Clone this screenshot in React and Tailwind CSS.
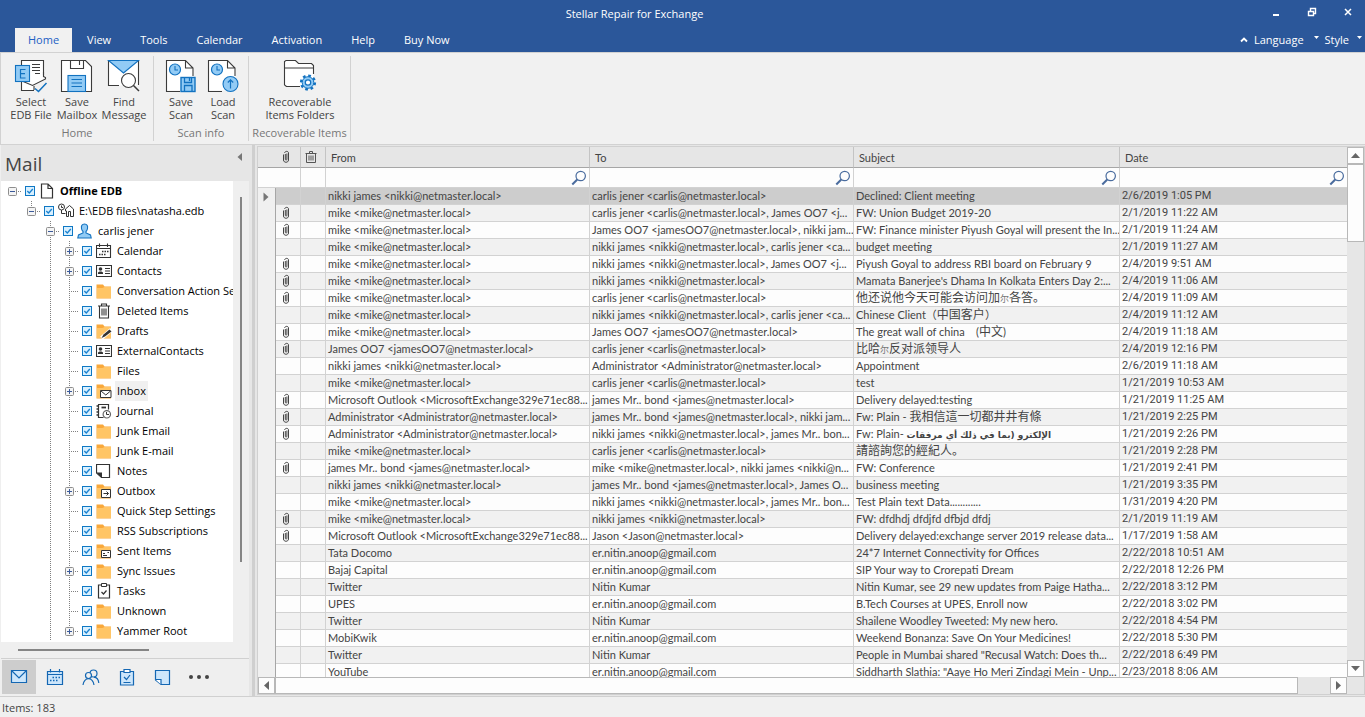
import React from "react";

const TABS = ["Home", "View", "Tools", "Calendar", "Activation", "Help", "Buy Now"];

const INK = "#3b3b3b";
const BLUE = "#1272c0";
const SKY = "#92cbf5";

/* ---------- ribbon icons ---------- */

function RibbonSvg({ children }) {
  return (
    <svg width="34" height="34" viewBox="0 0 34 34" fill="none" stroke={INK} strokeWidth="1.1" aria-hidden="true">
      {children}
    </svg>
  );
}

function EdbIcon() {
  return (
    <RibbonSvg>
      <path d="M7.500 1.500H29.500V20L20 26V31.500H7.500Z" fill="#fff" stroke="none" />
      <path d="M7.500 6.500V1.500H29.500V16M7.500 23V31.500H20" />
      <path d="M29.500 13v5M8 22L18.500 26.500L31.500 20V18.500L29.500 17.500M20 27v4" />
      <path d="M18 5.500h8M18 8.500h8M18 11.500h8M21 14.500h5" strokeWidth="1" />
      <rect x="1.500" y="6.500" width="14" height="16" fill={SKY} stroke={BLUE} />
      <path d="M11.500 10.500h-5v8.500h5M6.500 14.700h4.500" stroke={BLUE} strokeWidth="1.200" />
      <path d="M21 29.500L24.500 32.500L32.500 24" stroke={BLUE} strokeWidth="1.500" />
    </RibbonSvg>
  );
}

function SaveMailboxIcon() {
  return (
    <RibbonSvg>
      <path d="M1.500 1.500H25.500L31.500 7.500V32.500H1.500Z" fill="#fff" />
      <path d="M10.500 1.500V9.500H23.500V1.500M19.500 2v4" />
      <rect x="8" y="16.500" width="17.500" height="16" fill={SKY} stroke={BLUE} />
      <path d="M11.500 20.500h10.500M11.500 24h10.500M11.500 27.500h10.500" stroke={BLUE} strokeWidth="1.200" />
    </RibbonSvg>
  );
}

function FindMessageIcon() {
  return (
    <RibbonSvg>
      <path d="M1.500 1.500H31.500V26.500H1.500Z" fill="#fff" stroke="none" />
      <path d="M12 26.500H1.500V1.500M31.500 1.500V26" />
      <path d="M1.500 1.500H31.500L16.500 14Z" fill={SKY} stroke={BLUE} />
      <circle cx="21.500" cy="21.500" r="7" fill="#fff" />
      <path d="M26.500 26.500L32 32" strokeWidth="1.500" />
    </RibbonSvg>
  );
}

function ClockPage({ children }) {
  return (
    <RibbonSvg>
      <path d="M2.500 1.500H21.500L29.500 8.500V31.500H2.500Z" fill="#fff" stroke="none" />
      <path d="M16 32.500H2.500V1.500H21.500L29 9V17M21.500 1.500V9H29" />
      <circle cx="11" cy="10.500" r="5.500" fill={SKY} stroke={BLUE} strokeWidth="1.200" />
      <path d="M11 7v4h3" stroke={BLUE} />
      {children}
    </RibbonSvg>
  );
}

function SaveScanIcon() {
  return (
    <ClockPage>
      <rect x="17" y="18.500" width="14" height="14" fill={SKY} stroke={BLUE} strokeWidth="1.400" />
      <path d="M20.500 19v4.500h7v-4.500M20.500 32v-5.500h7.500v5.500M25.500 19v3" stroke={BLUE} strokeWidth="1.300" />
    </ClockPage>
  );
}

function LoadScanIcon() {
  return (
    <ClockPage>
      <circle cx="24.500" cy="25" r="7.500" fill={SKY} stroke={BLUE} />
      <path d="M24.500 29.500v-8.500M21.800 23.500L24.500 20.800L27.200 23.500" stroke={BLUE} strokeWidth="1.200" />
    </ClockPage>
  );
}

function FolderGearIcon() {
  return (
    <RibbonSvg>
      <path d="M1.500 26V2.500L3 1.500H12.500L15.500 4.500H28.500L30.500 6.500V27.500H3.500Z" fill="#fff" stroke="none" />
      <path d="M1.500 26V2.500L3 1.500H12.500L15.500 4.500H28.500L30.500 6.500V15" />
      <path d="M1.500 26L3.500 27.500H17M1.500 9H30.500" />
      <circle cx="25" cy="23.500" r="6.700" stroke={BLUE} strokeWidth="2.800" strokeDasharray="2.630 2.630" />
      <circle cx="25" cy="23.500" r="5.800" fill={SKY} stroke={BLUE} strokeWidth="1" />
      <circle cx="25" cy="23.500" r="2.700" fill="#fff" stroke={BLUE} strokeWidth="1.200" />
    </RibbonSvg>
  );
}

const GROUPS = [
  {
    title: "Home",
    className: "w-[153px]",
    pad: "pl-[7px]",
    buttons: [
      { lines: ["Select", "EDB File"], Icon: EdbIcon, className: "w-[46px]" },
      { lines: ["Save", "Mailbox"], Icon: SaveMailboxIcon, className: "w-[46px]" },
      { lines: ["Find", "Message"], Icon: FindMessageIcon, className: "w-12" },
    ],
  },
  {
    title: "Scan info",
    className: "w-[95px]",
    pad: "pl-[6px]",
    buttons: [
      { lines: ["Save", "Scan"], Icon: SaveScanIcon, className: "w-[42px]" },
      { lines: ["Load", "Scan"], Icon: LoadScanIcon, className: "w-[42px]" },
    ],
  },
  {
    title: "Recoverable Items",
    className: "w-[102px]",
    pad: "pl-[3px]",
    buttons: [{ lines: ["Recoverable", "Items Folders"], Icon: FolderGearIcon, className: "w-24" }],
  },
];

/* ---------- tree icons (16px) ---------- */

function Svg16({ children, width = 16, stroke = "#333" }) {
  return (
    <svg width={width} height="16" viewBox={`0 0 ${width} 16`} fill="none" stroke={stroke} aria-hidden="true" className="shrink-0">
      {children}
    </svg>
  );
}

function FolderBase() {
  return (
    <>
      <path d="M0.500 1.500H7L8.500 3.500H15V15.500H0.500Z" fill="#f9a83a" stroke="none" />
      <path d="M1 5H6.500L8.500 4H15V15H1Z" fill="#ffc566" stroke="none" />
    </>
  );
}

const TREE_ICONS = {
  page: (
    <Svg16>
      <path d="M2.500 1.500H9L13.500 6V15.500H2.500ZM9 1.500V6H13.500" strokeWidth="1.200" transform="translate(0 -0.500)" />
    </Svg16>
  ),
  edb: (
    <Svg16>
      <circle cx="3.500" cy="4" r="3" />
      <path d="M3.500 2.500v2h1.500M3.500 7v3.500h4" />
      <path d="M8.500 13.500V8H7.500V6L11.500 2.500L15.500 6V13.500H12.500V8.500H10.500V13.500Z" />
    </Svg16>
  ),
  person: (
    <Svg16 stroke={BLUE}>
      <path d="M7.500 1C5 1 4 3 4.500 5.500C4.700 7 5.500 8 6 8.500V10L1.500 12L0.800 15H14.200L13.500 12L9 10V8.500C9.500 8 10.300 7 10.500 5.500C11 3 10 1 7.500 1Z" fill={SKY} strokeWidth="1.100" />
    </Svg16>
  ),
  calendar: (
    <Svg16>
      <path d="M0.500 2.500H14.500V14.500H0.500ZM0.500 5.500H14.500M3.500 0.500V4M11.500 0.500V4" strokeWidth="1.100" />
      <path d="M6 8.500h1.500M8.500 8.500H10M11 8.500h1.500M3 11.500h1.500M5.500 11.500H7M8 11.500h1.500" strokeWidth="1.500" />
    </Svg16>
  ),
  contacts: (
    <Svg16>
      <path d="M0.500 2.500H15.500V13.500H0.500Z" strokeWidth="1.100" />
      <circle cx="4.500" cy="6" r="1.800" fill="#333" stroke="none" />
      <path d="M2 11V9.500L3.500 8.500H5.500L7 9.500V11Z" fill="#333" stroke="none" />
      <path d="M9 5.500h5M9 8h5M9 10.500h5" />
    </Svg16>
  ),
  folder: (
    <Svg16>
      <FolderBase />
    </Svg16>
  ),
  trash: (
    <Svg16>
      <path d="M2 3.500H14M5.500 3.500V1.500H10.500V3.500M3.500 3.500V15.500H12.500V3.500M6 6v7M8 6v7M10 6v7" strokeWidth="1.100" transform="translate(0 -0.500)" />
    </Svg16>
  ),
  drafts: (
    <Svg16>
      <FolderBase />
      <path d="M5.500 15L15.500 6.500" stroke="#fff" strokeWidth="4" />
      <path d="M5.500 15L7.500 11.500L13.500 6.500L15.500 8.500L9 13.500Z" fill="#333" stroke="none" />
    </Svg16>
  ),
  inbox: (
    <Svg16>
      <FolderBase />
      <path d="M4.500 7.500H15V14.500H4.500Z" fill="#fff" />
      <path d="M5 8L9.800 12L14.500 8" />
    </Svg16>
  ),
  journal: (
    <Svg16>
      <path d="M2 1.500H12.500V6.500M2.500 1.500V14.500H7.500" strokeWidth="1.200" />
      <path d="M0.500 3h2M0.500 6h2M0.500 9h2M0.500 12h2" strokeWidth="1.400" />
      <path d="M5.500 4.500h4.500" strokeWidth="1.800" />
      <circle cx="10.800" cy="11.300" r="3.700" fill="#fff" strokeWidth="1.200" stroke="#666" />
      <path d="M10.500 9v2.500H13" />
    </Svg16>
  ),
  notes: (
    <Svg16>
      <path d="M0.500 1.500H13.500V14.500H5.500L0.500 10Z" strokeWidth="1.200" />
      <path d="M0.500 9.500H6V15Z" fill="#333" stroke="none" />
    </Svg16>
  ),
  outbox: (
    <Svg16>
      <FolderBase />
      <path d="M5.500 6.500H14.500V14.500H5.500Z" fill="#fff" />
      <path d="M7.500 10.500H12.500M10.500 8.500L12.500 10.500L10.500 12.500" />
    </Svg16>
  ),
  sent: (
    <Svg16>
      <FolderBase />
      <path d="M5.500 7.500H14.500V14.500H5.500Z" fill="#fff" />
      <path d="M7 10.500h2M7 12.500h4M11.500 9.500h1.500" />
    </Svg16>
  ),
  tasks: (
    <Svg16>
      <path d="M2.500 2.500H13.500V15.500H2.500Z" strokeWidth="1.200" transform="translate(0 -0.500)" />
      <path d="M5.500 0.500H10.500V3.500H5.500Z" fill="#fff" />
      <path d="M5.500 9L7.500 11L10.500 7.500" strokeWidth="1.200" />
    </Svg16>
  ),
};

const TREE = [
  { label: "Offline EDB", icon: "page", level: 0, open: true, bold: true },
  { label: "E:\\EDB files\\natasha.edb", icon: "edb", level: 1, open: true },
  { label: "carlis jener", icon: "person", level: 2, open: true },
  { label: "Calendar", icon: "calendar", level: 3, closed: true },
  { label: "Contacts", icon: "contacts", level: 3, closed: true },
  { label: "Conversation Action Settings", icon: "folder", level: 3 },
  { label: "Deleted Items", icon: "trash", level: 3 },
  { label: "Drafts", icon: "drafts", level: 3 },
  { label: "ExternalContacts", icon: "contacts", level: 3 },
  { label: "Files", icon: "folder", level: 3 },
  { label: "Inbox", icon: "inbox", level: 3, closed: true, selected: true },
  { label: "Journal", icon: "journal", level: 3 },
  { label: "Junk Email", icon: "folder", level: 3 },
  { label: "Junk E-mail", icon: "folder", level: 3 },
  { label: "Notes", icon: "notes", level: 3 },
  { label: "Outbox", icon: "outbox", level: 3, closed: true },
  { label: "Quick Step Settings", icon: "folder", level: 3 },
  { label: "RSS Subscriptions", icon: "folder", level: 3 },
  { label: "Sent Items", icon: "sent", level: 3 },
  { label: "Sync Issues", icon: "folder", level: 3, closed: true },
  { label: "Tasks", icon: "tasks", level: 3 },
  { label: "Unknown", icon: "folder", level: 3 },
  { label: "Yammer Root", icon: "folder", level: 3, closed: true, last: true },
];

const DOTS = { stroke: "#808080", strokeDasharray: "1 1" };

function Guide({ children }) {
  return (
    <svg width="19" height="20" viewBox="0 0 19 20" fill="none" className="shrink-0" aria-hidden="true">
      {children}
    </svg>
  );
}

function TreeRow({ item }) {
  const { level, label, open, closed } = item;
  return (
    <li className="flex h-5 items-center pl-[2px]">
      {Array.from({ length: level }, (_, i) => (
        <Guide key={i}>{i === 2 && <path d="M9.500 0V20" {...DOTS} />}</Guide>
      ))}
      <Guide>
        {level > 0 && <path d={level === 1 || item.last ? "M9.500 0V10" : "M9.500 0V20"} {...DOTS} />}
        <path d="M11 10.500H19" {...DOTS} />
        {(open || closed) && (
          <>
            <rect x="5.500" y="6.500" width="8" height="8" rx="1" fill="#f4f4f4" stroke="#8e8e8e" />
            <path d={open ? "M7 10.500H12" : "M7 10.500H12M9.500 8V13"} stroke="#3b5a9a" />
          </>
        )}
      </Guide>
      <label className="flex h-5 items-center whitespace-nowrap">
        <span className="ml-[3px] grid shrink-0">
          <input type="checkbox" defaultChecked className="size-[10px] appearance-none border border-[#0f78c4] bg-[#d9f0ff] [grid-area:1/1]" />
          <svg width="10" height="10" viewBox="0 0 10 10" fill="none" className="pointer-events-none [grid-area:1/1]" aria-hidden="true">
            <path d="M2.300 5L4.300 7L7.800 3" stroke="#1a82d0" strokeWidth="1.300" />
          </svg>
        </span>
        <span className="ml-1 flex shrink-0">{TREE_ICONS[item.icon]}</span>
        <span
          className={`ml-[3px] h-5 px-[2px] leading-5 text-black ${item.bold ? "font-bold" : ""} ${item.selected ? "bg-[#f0f0f0]" : ""}`}
        >
          {label}
        </span>
      </label>
    </li>
  );
}

/* ---------- bottom navigation ---------- */

function NavSvg({ children }) {
  return (
    <svg width="18" height="18" viewBox="0 0 18 18" fill="none" stroke="#1467b3" strokeWidth="1.200" aria-hidden="true">
      {children}
    </svg>
  );
}

const NAV = [
  {
    name: "Mail",
    active: true,
    icon: (
      <NavSvg>
        <path d="M1.500 2.500H16.500V14.500H1.500Z" fill="#cde6fb" />
        <path d="M1.500 2.500L9 10L16.500 2.500" />
      </NavSvg>
    ),
  },
  {
    name: "Calendar",
    icon: (
      <NavSvg>
        <path d="M1.500 3.500H16.500V16.500H1.500Z" fill="#cde6fb" />
        <path d="M1.500 6.500H16.500M4.500 1V4.500M13.500 1V4.500" />
        <path d="M6.500 9.500H8M9.500 9.500H11M12.500 9.500H14M4 12.500H5.500M7 12.500H8.500M10 12.500H11.500" strokeWidth="1.500" />
      </NavSvg>
    ),
  },
  {
    name: "People",
    icon: (
      <NavSvg>
        <circle cx="11.500" cy="5.500" r="3.500" />
        <circle cx="6.500" cy="7.500" r="3" fill="#f0f0f0" />
        <path d="M1 17C1.300 13 4 10.700 6.500 10.700S11.700 13 12 17M12 9.200C15 9.500 16.500 12 16.800 15" />
      </NavSvg>
    ),
  },
  {
    name: "Tasks",
    icon: (
      <NavSvg>
        <path d="M2.500 3.500H15.500V17H2.500Z" fill="#cde6fb" />
        <path d="M6 1.500H12V4.500H6Z" fill="#fff" />
        <path d="M6 9L8.500 11.500L12 7M5.500 14.500H12.500" />
      </NavSvg>
    ),
  },
  {
    name: "Notes",
    icon: (
      <NavSvg>
        <path d="M1.500 2.500H15.500V16.500H7L1.500 12Z" fill="#cde6fb" />
        <path d="M1.500 11.500H7V16.500" fill="#fff" />
      </NavSvg>
    ),
  },
  {
    name: "More",
    icon: (
      <svg width="22" height="18" viewBox="0 0 22 18" fill="#444" aria-hidden="true">
        <circle cx="3" cy="9" r="2" />
        <circle cx="11" cy="9" r="2" />
        <circle cx="19" cy="9" r="2" />
      </svg>
    ),
  },
];

/* ---------- message grid ---------- */

const NIKKI = "nikki james <nikki@netmaster.local>";
const MIKE = "mike <mike@netmaster.local>";
const CARLIS = "carlis jener <carlis@netmaster.local>";
const JAMES = "James OO7 <jamesOO7@netmaster.local>";
const ADMIN = "Administrator <Administrator@netmaster.local>";
const OUTLOOK = "Microsoft Outlook <MicrosoftExchange329e71ec88...";
const NITIN = "er.nitin.anoop@gmail.com";

const ARABIC = (
  <>
    Fw: Plain-{" "}
    <bdi dir="rtl" lang="ar" className="font-['DejaVu_Sans',sans-serif] text-[9px] font-bold">
      الإلكترو (بما في ذلك أي مرفقات
    </bdi>
  </>
);

const ER = <span className="text-[9px] text-[#777]">尔</span>;

const MESSAGES = [
  [0, NIKKI, CARLIS, "Declined: Client meeting", "2/6/2019 1:05 PM"],
  [1, MIKE, "carlis jener <carlis@netmaster.local>, James OO7 <j...", "FW: Union Budget 2019-20", "2/1/2019 11:22 AM"],
  [1, MIKE, "James OO7 <jamesOO7@netmaster.local>, nikki jam...", "FW: Finance minister Piyush Goyal will present the In...", "2/1/2019 11:24 AM"],
  [0, MIKE, "nikki james <nikki@netmaster.local>, carlis jener <ca...", "budget meeting", "2/1/2019 11:27 AM"],
  [1, MIKE, "nikki james <nikki@netmaster.local>, James OO7 <j...", "Piyush Goyal to address RBI board on February 9", "2/4/2019 9:51 AM"],
  [1, MIKE, NIKKI, "Mamata Banerjee's Dhama In Kolkata Enters Day 2:...", "2/4/2019 11:06 AM"],
  [1, MIKE, CARLIS, <>他还说他今天可能会访问加{ER}各答。</>, "2/4/2019 11:09 AM", "cjk"],
  [0, MIKE, "nikki james <nikki@netmaster.local>, carlis jener <ca...", <>Chinese Client（<span className="text-xs">中国客户</span>）</>, "2/4/2019 11:12 AM"],
  [1, MIKE, JAMES, <>The great wall of china &nbsp;&nbsp; (<span className="text-xs">中文</span>)</>, "2/4/2019 11:18 AM"],
  [1, JAMES, CARLIS, <>比哈{ER}反对派领导人</>, "2/4/2019 12:16 PM", "cjk"],
  [0, NIKKI, ADMIN, "Appointment", "2/6/2019 11:18 AM"],
  [0, MIKE, CARLIS, "test", "1/21/2019 10:53 AM"],
  [1, OUTLOOK, "james Mr.. bond <james@netmaster.local>", "Delivery delayed:testing", "1/21/2019 11:25 AM"],
  [1, ADMIN, "james Mr.. bond <james@netmaster.local>, nikki jam...", <>Fw: Plain - <span className="text-xs">我相信這一切都井井有條</span></>, "1/21/2019 2:25 PM"],
  [1, ADMIN, "nikki james <nikki@netmaster.local>, james Mr.. bon...", ARABIC, "1/21/2019 2:26 PM"],
  [0, MIKE, CARLIS, "請諮詢您的經紀人。", "1/21/2019 2:28 PM", "cjk"],
  [1, "james Mr.. bond <james@netmaster.local>", "mike <mike@netmaster.local>, nikki james <nikki@n...", "FW: Conference", "1/21/2019 2:41 PM"],
  [0, NIKKI, "james Mr.. bond <james@netmaster.local>, James O...", "business meeting", "1/21/2019 3:35 PM"],
  [0, MIKE, "nikki james <nikki@netmaster.local>, james Mr.. bon...", "Test Plain text Data............", "1/31/2019 4:20 PM"],
  [1, MIKE, NIKKI, "FW: dfdhdj dfdjfd dfbjd dfdj", "2/1/2019 11:19 AM"],
  [1, OUTLOOK, "Jason <Jason@netmaster.local>", "Delivery delayed:exchange server 2019 release data...", "1/17/2019 1:58 AM"],
  [0, "Tata Docomo", NITIN, "24*7 Internet Connectivity for Offices", "2/22/2018 10:51 AM"],
  [0, "Bajaj Capital", NITIN, "SIP Your way to Crorepati Dream", "2/22/2018 12:26 PM"],
  [0, "Twitter", "Nitin Kumar", "Nitin Kumar, see 29 new updates from Paige Hatha...", "2/22/2018 3:12 PM"],
  [0, "UPES", NITIN, "B.Tech Courses at UPES, Enroll now", "2/22/2018 3:02 PM"],
  [0, "Twitter", "Nitin Kumar", "Shailene Woodley Tweeted: My new hero.", "2/22/2018 4:54 PM"],
  [0, "MobiKwik", NITIN, "Weekend Bonanza: Save On Your Medicines!", "2/22/2018 5:30 PM"],
  [0, "Twitter", "Nitin Kumar", "People in Mumbai shared \"Recusal Watch: Does th...", "2/22/2018 6:49 PM"],
  [0, "YouTube", NITIN, "Siddharth Slathia: \"Aaye Ho Meri Zindagi Mein - Unp...", "2/23/2018 8:06 AM"],
];

function Clip() {
  return (
    <svg width="8" height="14" viewBox="0 0 8 14" fill="none" stroke="#444" strokeWidth="1" className="ml-[6px]" aria-label="Attachment" role="img">
      <path d="M3.300 4V9.300C3.300 10.300 4.900 10.300 4.900 9.300V3.500" />
      <path d="M1.500 4.500V10C1.500 13 6.500 13 6.500 10V3C6.500 0.800 3 0.800 2.600 3" />
    </svg>
  );
}

function Magnifier() {
  return (
    <svg width="16" height="16" viewBox="0 0 16 16" fill="none" stroke="#4a6c9e" aria-hidden="true">
      <circle cx="9.700" cy="6" r="4.700" strokeWidth="1.200" />
      <path d="M6.300 9.500L1.300 14.500" strokeWidth="2" />
    </svg>
  );
}

function Arrow({ d }) {
  return (
    <svg width="9" height="9" viewBox="0 0 9 9" fill="#666" aria-hidden="true">
      <path d={d} />
    </svg>
  );
}

const SCROLL_BTN = "flex size-[17px] shrink-0 items-center justify-center border border-[#b8b8b8] bg-[#fdfdfd]";
const CELL = "h-[17px] border-r border-b border-[#d2d2d2] p-0";
const CELL_TEXT = "h-4 overflow-hidden pl-[2px] leading-4 whitespace-nowrap";

function MessageGrid() {
  return (
    <div className="flex min-w-0 flex-1 flex-col border border-[#d0d0d0] bg-[#e6e6e6]">
      <div className="flex min-h-0 flex-1">
        <div className="min-w-0 flex-1 overflow-hidden bg-[#f0f0f0]">
          <table className="w-full table-fixed border-separate border-spacing-0 text-left font-[Lato,'Noto_Sans_CJK_SC',sans-serif] text-[11px] text-[#444]">
            <colgroup>
              <col className="w-[18px]" />
              <col className="w-[25px]" />
              <col className="w-[25px]" />
              <col className="w-[264px]" />
              <col className="w-[264px]" />
              <col className="w-[266px]" />
              <col />
            </colgroup>
            <thead>
              <tr className="h-[21px] bg-[#e6e6e6]">
                <th className="border-b border-[#a6a6a6]" />
                <th className="border-r border-b border-r-[#c4c4c4] border-b-[#a6a6a6] p-0">
                  <Clip />
                </th>
                <th className="border-r border-b border-r-[#c4c4c4] border-b-[#a6a6a6] p-0">
                  <svg width="14" height="14" viewBox="0 0 14 14" fill="none" stroke="#555" className="ml-[3px]" aria-label="Deleted" role="img">
                    <path d="M1.500 3.500H12.500M5.500 3V1.500H8.500V3M2.500 3.500V12.500H11.500V3.500M5 5.500V10.500M7 5.500V10.500M9 5.500V10.500" />
                  </svg>
                </th>
                {["From", "To", "Subject", "Date"].map((h) => (
                  <th key={h} className="border-r border-b border-r-[#c4c4c4] border-b-[#a6a6a6] p-0 pt-[2px] pl-[5px] font-normal last:border-r-0">
                    {h}
                  </th>
                ))}
              </tr>
              <tr className="h-[20px] bg-[#fdfdfd]">
                <td className="border-b border-[#d2d2d2]" />
                <td className="border-r border-b border-[#d2d2d2]" />
                <td className="border-r border-b border-[#d2d2d2]" />
                {["From", "To", "Subject", "Date"].map((h) => (
                  <td key={h} className="border-r border-b border-[#d2d2d2] p-0 last:border-r-0">
                    <div className="flex items-center pr-[2px]">
                      <input aria-label={`Filter ${h}`} className="h-4 min-w-0 flex-1 bg-transparent outline-none" />
                      <button type="button" aria-label={`Search ${h}`}>
                        <Magnifier />
                      </button>
                    </div>
                  </td>
                ))}
              </tr>
            </thead>
            <tbody>
              {MESSAGES.map(([clip, from, to, subject, date, kind], i) => (
                <tr key={i} className={i === 0 ? "bg-[#cdcdcd]" : i % 2 ? "bg-[#f1f1f1]" : "bg-[#fdfdfd]"}>
                  <td className="h-[17px] border-r border-[#a6a6a6] bg-[#f0f0f0] p-0">
                    {i === 0 && (
                      <svg width="6" height="10" viewBox="0 0 6 10" fill="#777" className="ml-[5px]" aria-hidden="true">
                        <path d="M0.500 0.500L5.500 5L0.500 9.500Z" />
                      </svg>
                    )}
                  </td>
                  <td className={CELL}>{clip === 1 && <Clip />}</td>
                  <td className={CELL} />
                  <td className={CELL}>
                    <div className={CELL_TEXT}>{from}</div>
                  </td>
                  <td className={CELL}>
                    <div className={CELL_TEXT}>{to}</div>
                  </td>
                  <td className={CELL}>
                    <div className={`${CELL_TEXT} ${kind === "cjk" ? "text-xs leading-4" : ""}`}>{subject}</div>
                  </td>
                  <td className="h-[17px] border-b border-[#d2d2d2] p-0">
                    <div className="h-4 overflow-hidden pl-[2px] font-[Roboto,sans-serif] leading-4 whitespace-nowrap">{date}</div>
                  </td>
                </tr>
              ))}
            </tbody>
          </table>
        </div>
        <div className="flex w-[17px] shrink-0 flex-col">
          <button type="button" aria-label="Scroll up" className={SCROLL_BTN}>
            <Arrow d="M4.500 2L9 7H0Z" />
          </button>
          <div className="h-[78px] border border-[#b8b8b8] bg-[#fdfdfd]" />
          <div className="flex-1" />
          <button type="button" aria-label="Scroll down" className={SCROLL_BTN}>
            <Arrow d="M4.500 7L9 2H0Z" />
          </button>
        </div>
      </div>
      <div className="flex pr-[17px]">
        <button type="button" aria-label="Scroll left" className={SCROLL_BTN}>
          <Arrow d="M2 4.500L7 0V9Z" />
        </button>
        <div className="flex flex-1">
          <div className="w-[97%] border border-[#b8b8b8] bg-[#fdfdfd]" />
        </div>
        <button type="button" aria-label="Scroll right" className={SCROLL_BTN}>
          <Arrow d="M7 4.500L2 0V9Z" />
        </button>
      </div>
    </div>
  );
}

/* ---------- page ---------- */

function Caret() {
  return (
    <svg width="5" height="4" viewBox="0 0 5 4" fill="#fff" aria-hidden="true" className="mb-[5px]">
      <path d="M0 0H5L2.500 3Z" />
    </svg>
  );
}

function TitleBar() {
  return (
    <div className="grid h-7 shrink-0 grid-cols-[1fr_auto_1fr] items-center text-white">
      <span />
      <h1 className="pr-24 text-[11px] leading-4 font-normal">Stellar Repair for Exchange</h1>
      <div className="flex items-center justify-end gap-[26px] pr-3 pb-1">
        <button type="button" aria-label="Minimize">
          <svg width="10" height="10" viewBox="0 0 10 10" stroke="#fff" strokeWidth="2"><path d="M2 8H8" /></svg>
        </button>
        <button type="button" aria-label="Restore">
          <svg width="10" height="10" viewBox="0 0 10 10" fill="none" stroke="#fff">
            <path d="M3.500 4V1.500H8.500V6.500H6.500M3 1.500H9M1.500 4.500H6.500V8.500H1.500ZM1 4.500H7" strokeWidth="1.400" />
          </svg>
        </button>
        <button type="button" aria-label="Close">
          <svg width="10" height="10" viewBox="0 0 10 10" stroke="#fff" strokeWidth="1.500"><path d="M2 2L8 8M8 2L2 8" /></svg>
        </button>
      </div>
    </div>
  );
}

function TabBar() {
  return (
    <div className="flex h-6 shrink-0 items-end justify-between pl-[15px] text-[11px] text-white">
      <nav className="flex gap-px">
        {TABS.map((t, i) => (
          <button
            key={t}
            type="button"
            className={`h-6 leading-6 ${i === 0 ? "bg-[#f1f1f1] px-[13px] text-[#2260c4]" : "px-[14px]"}`}
          >
            {t}
          </button>
        ))}
      </nav>
      <div className="flex h-6 items-center gap-[6px] pr-[3px]">
        <button type="button" aria-label="Collapse ribbon">
          <svg width="8" height="6" viewBox="0 0 8 6" fill="none" stroke="#fff" strokeWidth="1.800"><path d="M1 4.500L4 1.500L7 4.500" /></svg>
        </button>
        <button type="button" className="flex items-center gap-[10px]">Language<Caret /></button>
        <button type="button" className="flex items-center gap-[8px]">Style<Caret /></button>
      </div>
    </div>
  );
}

function Ribbon() {
  return (
    <div className="flex h-[93px] shrink-0 border-y border-l border-[#d2d2d2] bg-[#f1f1f1] py-[3px]">
      {GROUPS.map((g) => (
        <section key={g.title} className={`flex shrink-0 flex-col border-r border-[#d2d2d2] ${g.className}`}>
          <div className={`flex pt-[3px] ${g.pad}`}>
            {g.buttons.map(({ lines, Icon, className }) => (
              <button key={lines.join()} type="button" className={`flex shrink-0 flex-col items-center text-[11px] leading-[13px] text-[#444] ${className}`}>
                <Icon />
                <span className="mt-[2px] whitespace-nowrap">{lines[0]}</span>
                <span className="whitespace-nowrap">{lines[1]}</span>
              </button>
            ))}
          </div>
          <h2 className="mt-[5px] text-center text-[11px] leading-[13px] font-normal whitespace-nowrap text-[#777]">{g.title}</h2>
        </section>
      ))}
    </div>
  );
}

function Sidebar() {
  return (
    <aside className="flex w-[249px] shrink-0 flex-col bg-[#efefef] pl-px">
      <div className="flex h-9 shrink-0 justify-between bg-[#e6e6e6] pr-[7px] pl-1">
        <h2 className="text-[19px] leading-[38px] text-[#444]">Mail</h2>
        <button type="button" aria-label="Collapse panel" className="mt-2 self-start">
          <svg width="5" height="8" viewBox="0 0 5 8" fill="#777"><path d="M5 0V8L0.500 4Z" /></svg>
        </button>
      </div>
      <div className="flex min-h-0 flex-1">
        <ul className="min-w-0 flex-1 overflow-hidden bg-white text-[11px]">
          {TREE.map((item) => (
            <TreeRow key={item.label} item={item} />
          ))}
        </ul>
        <div className="flex w-4 shrink-0 flex-col items-center pt-4 pb-20">
          <div className="w-[2px] flex-1 bg-[#858585]" />
        </div>
      </div>
      <div className="flex h-[17px] shrink-0 items-center border-b border-[#d0d0d0] pl-[17px]">
        <div className="h-[2px] w-[131px] bg-[#858585]" />
      </div>
      <nav className="flex h-[37px] shrink-0 gap-[2px] pt-px pl-px">
        {NAV.map((n) => (
          <button
            key={n.name}
            type="button"
            aria-label={n.name}
            className={`flex h-[34px] w-[34px] shrink-0 items-center justify-center ${n.active ? "bg-[#cdcdcd]" : ""}`}
          >
            {n.icon}
          </button>
        ))}
      </nav>
    </aside>
  );
}

export default function App() {
  return (
    <div className="flex h-screen flex-col overflow-hidden bg-[#2b579a] font-['Open_Sans','Noto_Sans',sans-serif]">
      <TitleBar />
      <TabBar />
      <Ribbon />
      <main className="flex min-h-0 flex-1 bg-[#e6e6e6]">
        <Sidebar />
        <div className="w-2 shrink-0 border-r-2 border-l-[3px] border-[#e6e6e6] bg-[#cfcfcf]" />
        <div className="flex min-w-0 flex-1 pt-px pb-px">
          <MessageGrid />
        </div>
      </main>
      <footer className="h-[21px] shrink-0 border-t border-[#d0d0d0] bg-[#f0f0f0] pl-[2px] text-[11px] leading-[22px] text-[#444]">
        Items: 183
      </footer>
    </div>
  );
}
